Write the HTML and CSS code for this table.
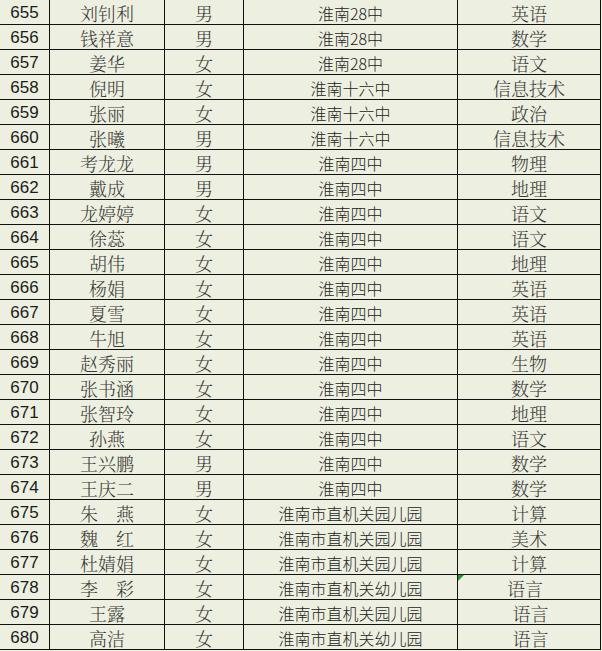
FILE: index.html
```html
<!DOCTYPE html>
<html lang="zh-CN">
<head>
<meta charset="utf-8">
<title>名单</title>
<link rel="stylesheet" href="styles.css">
</head>
<body>
<div class="sheet">
  <div class="row"><div class="c num">655</div><div class="c name">刘钊利</div><div class="c sex">男</div><div class="c school">淮南28中</div><div class="c subj">英语</div></div>
  <div class="row"><div class="c num">656</div><div class="c name">钱祥意</div><div class="c sex">男</div><div class="c school">淮南28中</div><div class="c subj">数学</div></div>
  <div class="row"><div class="c num">657</div><div class="c name">姜华</div><div class="c sex">女</div><div class="c school">淮南28中</div><div class="c subj">语文</div></div>
  <div class="row"><div class="c num">658</div><div class="c name">倪明</div><div class="c sex">女</div><div class="c school">淮南十六中</div><div class="c subj">信息技术</div></div>
  <div class="row"><div class="c num">659</div><div class="c name">张丽</div><div class="c sex">女</div><div class="c school">淮南十六中</div><div class="c subj">政治</div></div>
  <div class="row"><div class="c num">660</div><div class="c name">张曦</div><div class="c sex">男</div><div class="c school">淮南十六中</div><div class="c subj">信息技术</div></div>
  <div class="row"><div class="c num">661</div><div class="c name">考龙龙</div><div class="c sex">男</div><div class="c school">淮南四中</div><div class="c subj">物理</div></div>
  <div class="row"><div class="c num">662</div><div class="c name">戴成</div><div class="c sex">男</div><div class="c school">淮南四中</div><div class="c subj">地理</div></div>
  <div class="row"><div class="c num">663</div><div class="c name">龙婷婷</div><div class="c sex">女</div><div class="c school">淮南四中</div><div class="c subj">语文</div></div>
  <div class="row"><div class="c num">664</div><div class="c name">徐蕊</div><div class="c sex">女</div><div class="c school">淮南四中</div><div class="c subj">语文</div></div>
  <div class="row"><div class="c num">665</div><div class="c name">胡伟</div><div class="c sex">女</div><div class="c school">淮南四中</div><div class="c subj">地理</div></div>
  <div class="row"><div class="c num">666</div><div class="c name">杨娟</div><div class="c sex">女</div><div class="c school">淮南四中</div><div class="c subj">英语</div></div>
  <div class="row"><div class="c num">667</div><div class="c name">夏雪</div><div class="c sex">女</div><div class="c school">淮南四中</div><div class="c subj">英语</div></div>
  <div class="row"><div class="c num">668</div><div class="c name">牛旭</div><div class="c sex">女</div><div class="c school">淮南四中</div><div class="c subj">英语</div></div>
  <div class="row"><div class="c num">669</div><div class="c name">赵秀丽</div><div class="c sex">女</div><div class="c school">淮南四中</div><div class="c subj">生物</div></div>
  <div class="row"><div class="c num">670</div><div class="c name">张书涵</div><div class="c sex">女</div><div class="c school">淮南四中</div><div class="c subj">数学</div></div>
  <div class="row"><div class="c num">671</div><div class="c name">张智玲</div><div class="c sex">女</div><div class="c school">淮南四中</div><div class="c subj">地理</div></div>
  <div class="row"><div class="c num">672</div><div class="c name">孙燕</div><div class="c sex">女</div><div class="c school">淮南四中</div><div class="c subj">语文</div></div>
  <div class="row"><div class="c num">673</div><div class="c name">王兴鹏</div><div class="c sex">男</div><div class="c school">淮南四中</div><div class="c subj">数学</div></div>
  <div class="row"><div class="c num">674</div><div class="c name">王庆二</div><div class="c sex">男</div><div class="c school">淮南四中</div><div class="c subj">数学</div></div>
  <div class="row"><div class="c num">675</div><div class="c name">朱　燕</div><div class="c sex">女</div><div class="c school">淮南市直机关园儿园</div><div class="c subj">计算</div></div>
  <div class="row"><div class="c num">676</div><div class="c name">魏　红</div><div class="c sex">女</div><div class="c school">淮南市直机关园儿园</div><div class="c subj">美术</div></div>
  <div class="row"><div class="c num">677</div><div class="c name">杜婧娟</div><div class="c sex">女</div><div class="c school">淮南市直机关园儿园</div><div class="c subj">计算</div></div>
  <div class="row"><div class="c num">678</div><div class="c name">李　彩</div><div class="c sex">女</div><div class="c school">淮南市直机关幼儿园</div><div class="c subj flag shift-l">语言</div></div>
  <div class="row"><div class="c num">679</div><div class="c name">王露</div><div class="c sex">女</div><div class="c school">淮南市直机关园儿园</div><div class="c subj shift-r">语言</div></div>
  <div class="row"><div class="c num">680</div><div class="c name">高洁</div><div class="c sex">女</div><div class="c school">淮南市直机关幼儿园</div><div class="c subj shift-r">语言</div></div>
</div>
</body>
</html>
```

FILE: styles.css
```css
html, body {
  margin: 0;
  padding: 0;
  background: #edf0e0;
}

.sheet {
  width: 601px;
  display: flex;
  flex-direction: column;
}

.row {
  display: grid;
  grid-template-columns: 50px 115px 79px 214px 143px;
  height: 25px;
}

.c {
  box-sizing: border-box;
  border-right: 1px solid #111;
  border-bottom: 1px solid #111;
  height: 25px;
  padding-top: 2px;
  line-height: 22px;
  text-align: center;
  white-space: nowrap;
  overflow: hidden;
}

.num {
  font-family: "Liberation Sans", Arial, sans-serif;
  font-size: 17px;
  color: #1c1c1c;
}

.name, .sex, .subj {
  font-family: "Noto Serif CJK SC", "Noto Sans CJK SC", serif;
  font-size: 18px;
  font-weight: 300;
  color: #3a3a3a;
}

.school {
  font-family: "Noto Sans CJK SC", sans-serif;
  font-size: 16px;
  font-weight: 300;
  color: #222;
}

.subj.shift-l {
  padding-right: 8px;
}

.subj.shift-r {
  padding-left: 3px;
}

.flag {
  position: relative;
}

.flag::before {
  content: "";
  position: absolute;
  left: 0;
  top: 0;
  width: 0;
  height: 0;
  border-top: 6px solid #1f9a2a;
  border-right: 6px solid transparent;
}
```
